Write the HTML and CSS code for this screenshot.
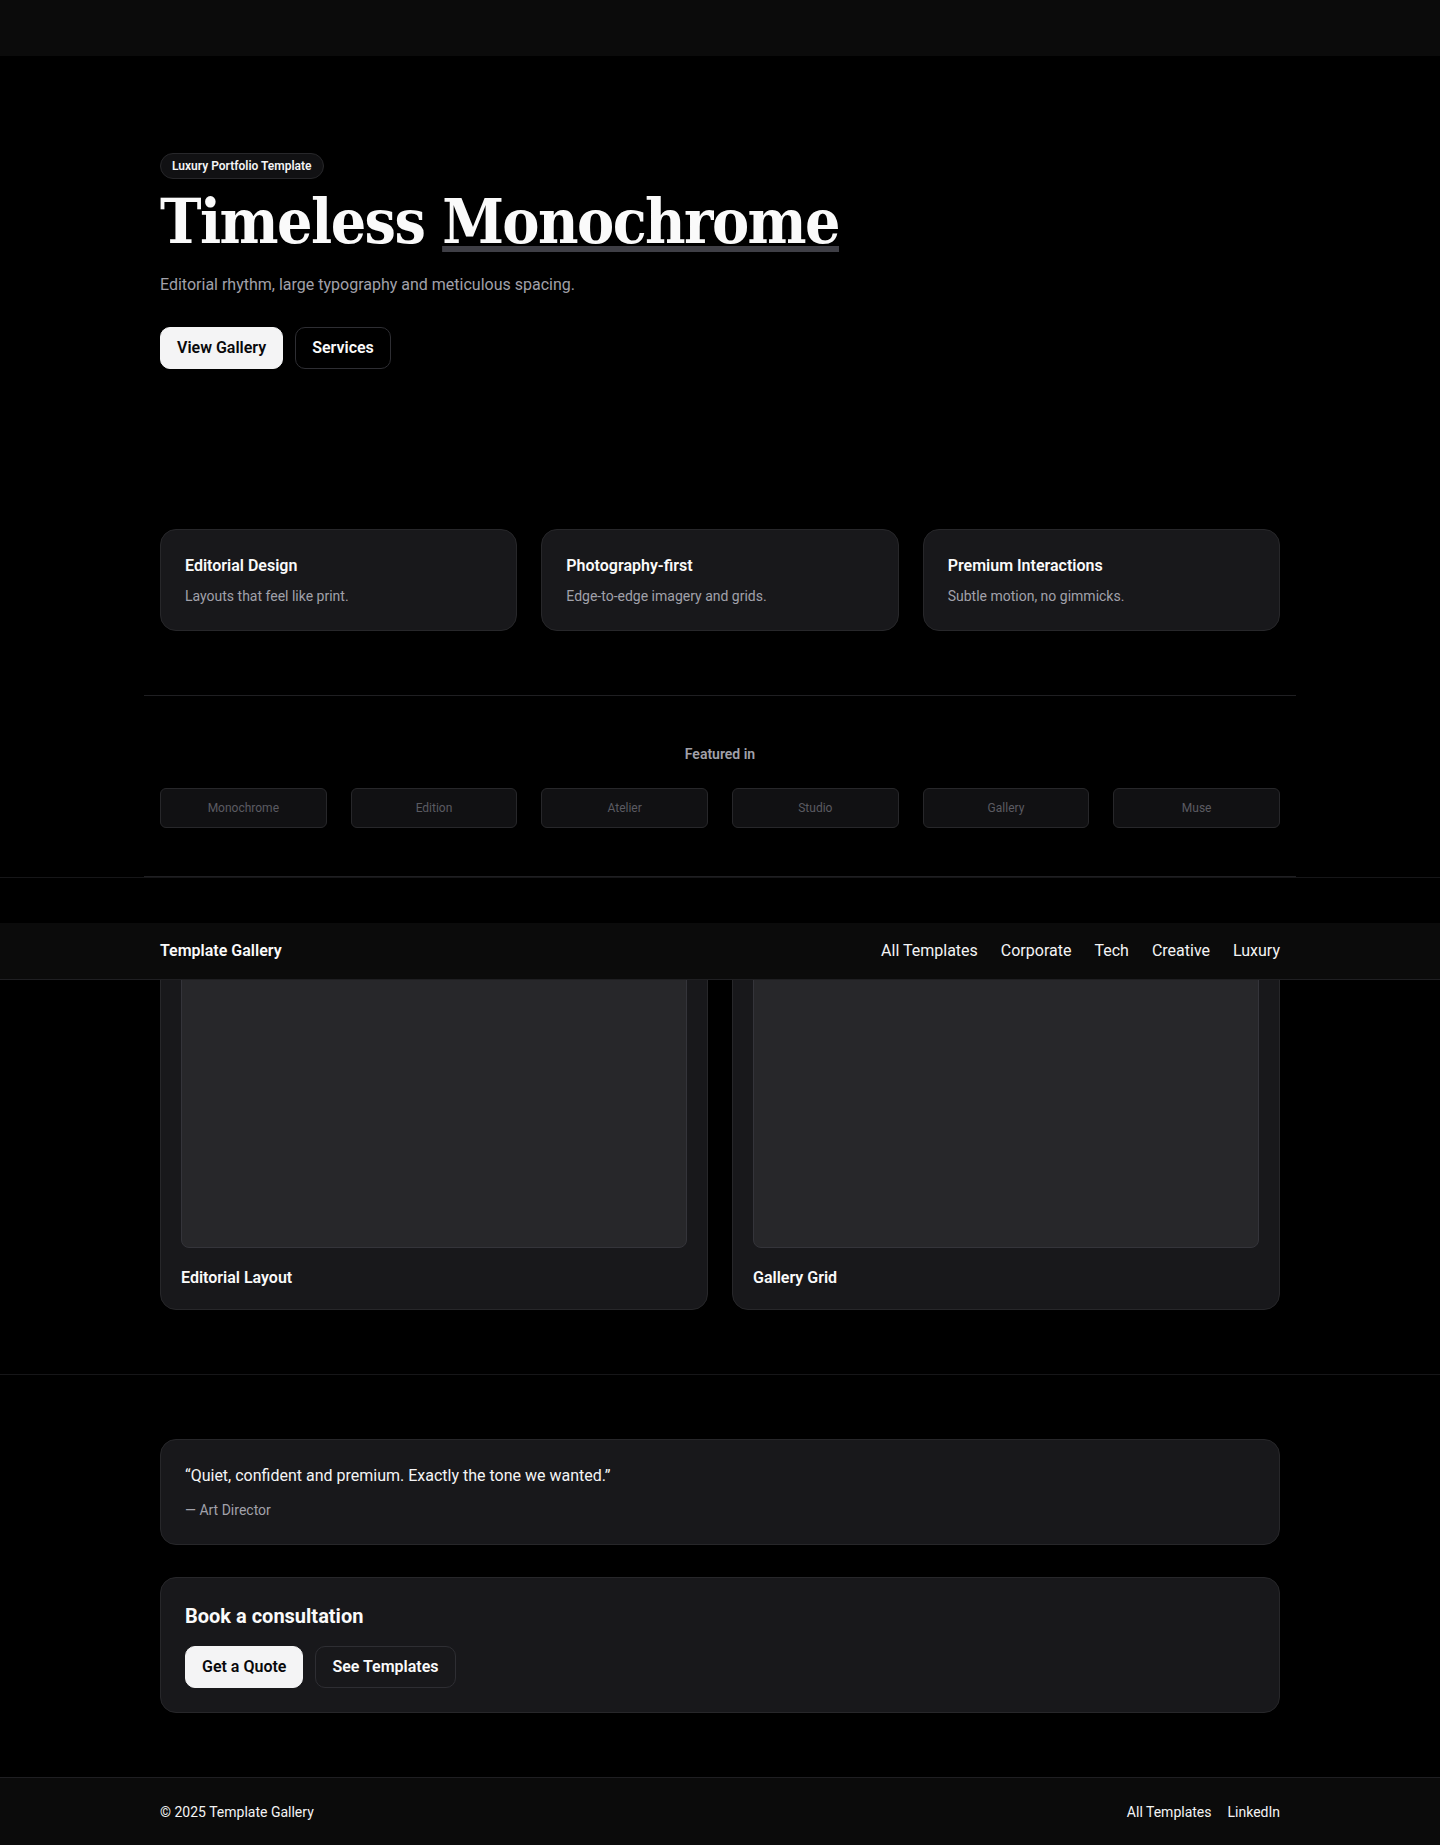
FILE: index.html
```html
<!DOCTYPE html>
<html lang="en">
<head>
<meta charset="utf-8">
<title>Timeless Monochrome</title>
<link rel="stylesheet" href="styles.css">
</head>
<body>
<header class="topbar"></header>

<section class="hero">
  <div class="container">
    <span class="badge">Luxury Portfolio Template</span>
    <h1 class="hero-title">Timeless <span class="underlined">Monochrome</span></h1>
    <p class="hero-sub">Editorial rhythm, large typography and meticulous spacing.</p>
    <div class="actions">
      <a class="btn btn-light">View Gallery</a>
      <a class="btn btn-dark">Services</a>
    </div>
  </div>
</section>

<section class="features">
  <div class="container grid-3">
    <div class="card feature">
      <h3 class="feature-title">Editorial Design</h3>
      <p class="feature-desc">Layouts that feel like print.</p>
    </div>
    <div class="card feature">
      <h3 class="feature-title">Photography-first</h3>
      <p class="feature-desc">Edge-to-edge imagery and grids.</p>
    </div>
    <div class="card feature">
      <h3 class="feature-title">Premium Interactions</h3>
      <p class="feature-desc">Subtle motion, no gimmicks.</p>
    </div>
  </div>
</section>

<section class="featured-wrap">
  <div class="featured">
    <p class="featured-label">Featured in</p>
    <div class="logos">
      <div class="logo">Monochrome</div>
      <div class="logo">Edition</div>
      <div class="logo">Atelier</div>
      <div class="logo">Studio</div>
      <div class="logo">Gallery</div>
      <div class="logo">Muse</div>
    </div>
  </div>
</section>

<section class="gallery">
  <nav class="nav">
    <div class="container nav-inner">
      <span class="brand">Template Gallery</span>
      <div class="nav-links">
        <a>All Templates</a>
        <a>Corporate</a>
        <a>Tech</a>
        <a>Creative</a>
        <a>Luxury</a>
      </div>
    </div>
  </nav>
  <div class="container grid-2">
    <div class="card shot">
      <div class="shot-img"></div>
      <h3 class="shot-title">Editorial Layout</h3>
    </div>
    <div class="card shot">
      <div class="shot-img"></div>
      <h3 class="shot-title">Gallery Grid</h3>
    </div>
  </div>
</section>

<section class="closing">
  <div class="container stack">
    <div class="card quote-card">
      <p class="quote">“Quiet, confident and premium. Exactly the tone we wanted.”</p>
      <p class="author">— Art Director</p>
    </div>
    <div class="card cta">
      <h2 class="cta-title">Book a consultation</h2>
      <div class="actions cta-actions">
        <a class="btn btn-light">Get a Quote</a>
        <a class="btn btn-dark">See Templates</a>
      </div>
    </div>
  </div>
</section>

<footer class="footer">
  <div class="container footer-inner">
    <span>© 2025 Template Gallery</span>
    <div class="footer-links">
      <a>All Templates</a>
      <a>LinkedIn</a>
    </div>
  </div>
</footer>
</body>
</html>
```

FILE: styles.css
```css
* { box-sizing: border-box; }
html, body { margin: 0; padding: 0; }
body {
  background: #000;
  color: #fafafa;
  font-family: Roboto, "Noto Sans", "Liberation Sans", sans-serif;
  font-size: 16px;
  line-height: 24px;
}
h1, h2, h3, p { margin: 0; }
a { color: inherit; text-decoration: none; }

.container {
  width: 1120px;
  margin: 0 auto;
}

.topbar {
  height: 56px;
  background: #0b0b0b;
}

.hero { padding: 97px 0 96px; }
.badge {
  display: inline-block;
  height: 26px;
  padding: 0 11px;
  border: 1px solid #27272a;
  border-radius: 999px;
  background: #111113;
  font-size: 12px;
  font-weight: 600;
  line-height: 24px;
  color: #f4f4f5;
}
.hero-title {
  margin-top: 12px;
  font-family: "DejaVu Serif Condensed", "DejaVu Serif", "Liberation Serif", serif;
  font-stretch: condensed;
  font-size: 62px;
  line-height: 62px;
  font-weight: 700;
  letter-spacing: -0.025em;
  color: #fafafa;
}
.underlined {
  text-decoration: underline;
  text-decoration-color: #3f3f46;
  text-decoration-thickness: 6px;
  text-underline-offset: 3px;
}
.hero-sub {
  margin-top: 18px;
  line-height: 28px;
  color: #a1a1aa;
}
.actions {
  display: flex;
  gap: 12px;
  margin-top: 28px;
}
.btn {
  display: inline-block;
  padding: 8px 16px;
  border: 1px solid #27272a;
  border-radius: 10px;
  font-weight: 600;
  line-height: 24px;
}
.btn-light {
  background: #f4f4f5;
  border-color: #f4f4f5;
  color: #09090b;
}
.btn-dark {
  background: transparent;
  border-color: #2e2e33;
  color: #fafafa;
}

.card {
  background: #18181b;
  border: 1px solid #27272a;
  border-radius: 16px;
}

.features { padding: 64px 0 64px; }
.grid-3 {
  display: grid;
  grid-template-columns: repeat(3, 1fr);
  gap: 24px;
}
.feature { padding: 24px; }
.feature-title { font-size: 16px; font-weight: 600; line-height: 24px; }
.feature-desc { margin-top: 8px; font-size: 14px; line-height: 20px; color: #a1a1aa; }

.featured-wrap { padding: 0; }
.featured {
  width: 1152px;
  margin: 0 auto;
  padding: 48px 16px 48px;
  border-top: 1px solid #1f1f22;
  border-bottom: 1px solid #1f1f22;
}
.featured-label {
  text-align: center;
  font-size: 14px;
  line-height: 20px;
  font-weight: 600;
  color: #a1a1aa;
}
.logos {
  margin-top: 24px;
  display: grid;
  grid-template-columns: repeat(6, 1fr);
  gap: 24px;
}
.logo {
  height: 40px;
  display: flex;
  align-items: center;
  justify-content: center;
  background: #111113;
  border: 1px solid #27272a;
  border-radius: 6px;
  font-size: 12px;
  color: #5b5b62;
}

.gallery {
  border-top: 1px solid #161618;
  padding: 45px 0 64px;
}
.nav {
  position: relative;
  z-index: 2;
  height: 57px;
  background: #0b0b0b;
  border-bottom: 1px solid #1f1f22;
}
.nav-inner {
  height: 56px;
  display: flex;
  align-items: center;
  justify-content: space-between;
}
.brand { font-weight: 600; }
.nav-links { display: flex; gap: 23px; color: #f4f4f5; }
.grid-2 {
  position: relative;
  z-index: 1;
  margin-top: -40px;
  display: grid;
  grid-template-columns: repeat(2, 1fr);
  gap: 24px;
}
.shot { padding: 20px 20px 19px; }
.shot-img {
  height: 287px;
  background: #27272a;
  border: 1px solid #34343a;
  border-radius: 8px;
}
.shot-title { margin-top: 18px; font-size: 16px; font-weight: 600; line-height: 24px; }

.closing {
  border-top: 1px solid #161618;
  padding: 64px 0 64px;
}
.stack { display: flex; flex-direction: column; gap: 32px; }
.quote-card { padding: 24px; }
.quote { line-height: 24px; color: #f4f4f5; }
.author { margin-top: 12px; font-size: 14px; line-height: 20px; color: #a1a1aa; }
.cta { padding: 24px; }
.cta-title { font-size: 20px; line-height: 28px; font-weight: 700; }
.cta-actions { margin-top: 16px; }

.footer {
  background: #0b0b0b;
  border-top: 1px solid #1f1f22;
  padding: 24px 0;
  font-size: 14px;
  line-height: 20px;
  color: #f4f4f5;
}
.footer-inner { display: flex; justify-content: space-between; align-items: center; }
.footer-links { display: flex; gap: 16px; }
```
